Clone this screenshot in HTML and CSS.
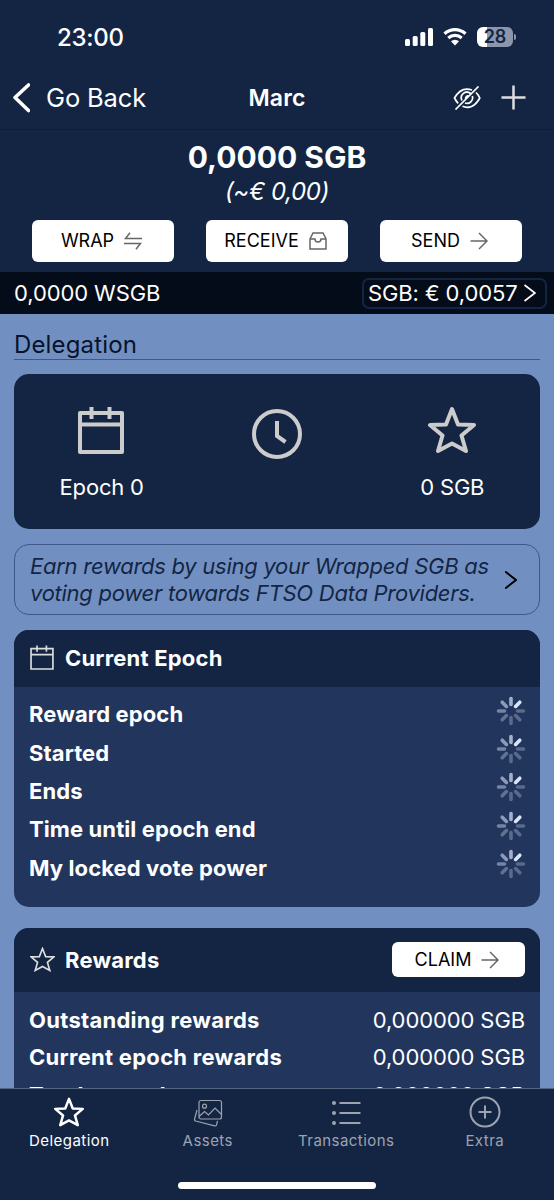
FILE: index.html
```
<!DOCTYPE html>
<html lang="en">
<head>
<meta charset="utf-8">
<title>Wallet</title>
<link rel="stylesheet" href="styles.css">
</head>
<body>
<svg class="defs" aria-hidden="true">
  <symbol id="calendar" viewBox="0 0 48 48"><path d="M2 7h42v39H2zM2 18.500h42M13.500 1v12M31.500 1v12"/></symbol>
  <symbol id="star" viewBox="0 0 48 48"><path d="M24 3l6 15.500 16 .5-12.500 10.500L38 45 24 37.500 10 45l4.500-15.500L2 19l16-.5z"/></symbol>
  <symbol id="arrow" viewBox="0 0 18 18"><path d="M.5 9h16M9 1l8 8-8 8"/></symbol>
  <symbol id="spinner" viewBox="0 0 30 30">
    <path d="M15 2.500v6" opacity=".7"/><path d="M23.800 6.200l-4.200 4.200"/>
    <path d="M27.500 15h-6" opacity=".3"/><path d="M23.800 23.800l-4.200-4.200" opacity=".3"/>
    <path d="M15 27.500v-6" opacity=".3"/><path d="M6.200 23.800l4.200-4.200" opacity=".35"/>
    <path d="M2.500 15h6" opacity=".45"/><path d="M6.200 6.200l4.200 4.200" opacity=".58"/>
  </symbol>
</svg>
<div class="screen">
  <header class="status">
    <span class="time">23:00</span>
    <div class="status-icons">
      <svg class="signal" viewBox="0 0 28 18"><rect x="0" y="11" width="5" height="7" rx="1.500"/><rect x="7.700" y="8" width="5" height="10" rx="1.500"/><rect x="15.300" y="4" width="5" height="14" rx="1.500"/><rect x="23" y="0" width="5" height="18" rx="1.500"/></svg>
      <svg class="wifi" viewBox="0 0 24 18"><path d="M1.500 5.700a15.500 15.500 0 0 1 21 0M5.300 10a9.900 9.900 0 0 1 13.400 0"/><path class="dot" d="M8 13.300a6 6 0 0 1 8 0L12 17.500z"/></svg>
      <div class="battery"><span class="level">28</span><i class="tip"></i></div>
    </div>
  </header>
  <nav class="topbar">
    <div class="back"><svg class="back-icon" viewBox="0 0 20 32"><path d="M18.500 3L5 15.500l13.500 13"/></svg><span>Go Back</span></div>
    <h1 class="title">Marc</h1>
    <div class="actions">
      <svg class="eye" viewBox="0 0 28 24"><path d="M19 4C12 1.500 6 4 1.500 12c1 2 2.200 3.900 3.700 5.300M23 6.500c1.500 1.400 2.800 3.300 3.800 5.500C22.500 20 16 23 9.500 20.300M17.500 7.500A5.600 5.600 0 0 0 9 14.500M19.300 10a5.600 5.600 0 0 1-7.300 7M15.500 10a2.500 2.500 0 0 0-3 2.500M2.500 23.500L25.500.5"/></svg>
      <svg class="plus" viewBox="0 0 26 26"><path d="M13 .5v25M.5 13h25"/></svg>
    </div>
  </nav>
  <section class="balance">
    <div class="amount">0,0000 SGB</div>
    <div class="fiat">(~€ 0,00)</div>
    <div class="buttons">
      <button class="button">WRAP <svg class="button-icon" viewBox="0 0 18 18"><path d="M18 6.500H1.500L6 .8M0 11.500h16.500L12 17.200"/></svg></button>
      <button class="button">RECEIVE <svg class="button-icon" viewBox="0 0 18 18"><path d="M1 7l3-6h10l3 6v10H1zM1 7h5c0 2 1.200 3 3 3s3-1 3-3h5"/></svg></button>
      <button class="button">SEND <svg class="button-icon"><use href="#arrow"/></svg></button>
    </div>
  </section>
  <section class="ticker">
    <span class="wrapped">0,0000 WSGB</span>
    <div class="price"><span>SGB: € 0,0057</span><svg class="price-icon" viewBox="0 0 12 18"><path d="M.5 1l10.500 8L.5 17"/></svg></div>
  </section>
  <main class="content">
    <h2 class="heading">Delegation</h2>
    <section class="summary">
      <div class="stat"><svg class="stat-icon"><use href="#calendar"/></svg><span>Epoch 0</span></div>
      <div class="stat"><svg class="clock" viewBox="0 0 50 50"><circle cx="25" cy="25" r="23"/><path d="M25 12v15l8.500 6"/></svg></div>
      <div class="stat"><svg class="stat-icon"><use href="#star"/></svg><span>0 SGB</span></div>
    </section>
    <section class="hint">
      <p class="hint-text">Earn rewards by using your Wrapped SGB as<br>voting power towards FTSO Data Providers.</p>
      <svg class="hint-icon" viewBox="0 0 12 18"><path d="M.8 1L11 9 .8 17"/></svg>
    </section>
    <section class="card">
      <div class="card-head"><svg class="head-icon"><use href="#calendar"/></svg><h3 class="card-title">Current Epoch</h3></div>
      <div class="rows">
        <div class="row"><span>Reward epoch</span><svg class="spinner"><use href="#spinner"/></svg></div>
        <div class="row"><span>Started</span><svg class="spinner"><use href="#spinner"/></svg></div>
        <div class="row"><span>Ends</span><svg class="spinner"><use href="#spinner"/></svg></div>
        <div class="row"><span>Time until epoch end</span><svg class="spinner"><use href="#spinner"/></svg></div>
        <div class="row"><span>My locked vote power</span><svg class="spinner"><use href="#spinner"/></svg></div>
      </div>
    </section>
    <section class="card">
      <div class="card-head tall"><svg class="head-icon"><use href="#star"/></svg><h3 class="card-title">Rewards</h3><button class="button claim">CLAIM <svg class="button-icon"><use href="#arrow"/></svg></button></div>
      <div class="rows compact">
        <div class="row"><span>Outstanding rewards</span><span class="value">0,000000 SGB</span></div>
        <div class="row"><span>Current epoch rewards</span><span class="value">0,000000 SGB</span></div>
        <div class="row"><span>Total rewards</span><span class="value">0,000000 SGB</span></div>
      </div>
    </section>
  </main>
  <footer class="tabbar">
    <div class="tabs">
      <div class="tab active"><svg class="tab-icon tab-star"><use href="#star"/></svg><span>Delegation</span></div>
      <div class="tab"><svg class="tab-icon thin" viewBox="0 0 30 30"><rect x="6" y="3.500" width="22.500" height="18.500" rx="2"/><circle cx="11.500" cy="9.200" r="2"/><path d="M6 19.500l5.500-5 4 3.500 6.500-7 6.500 6.500M4 13L1.600 22q-.4 1.500 1 2l19 4.900q1.500.4 1.900-1l1-4"/></svg><span>Assets</span></div>
      <div class="tab"><svg class="tab-icon" viewBox="0 0 30 30"><path d="M8.500 6H29.500M8.500 16H29.500M8.500 26H29.500"/><g class="bullets"><circle cx="3" cy="6" r="2"/><circle cx="3" cy="16" r="2"/><circle cx="3" cy="26" r="2"/></g></svg><span>Transactions</span></div>
      <div class="tab"><svg class="tab-icon plus-circle" viewBox="0 0 32 32"><circle cx="16" cy="16" r="14.500"/><path d="M16 9.500v13M9.500 16h13"/></svg><span>Extra</span></div>
    </div>
    <div class="home-indicator"></div>
  </footer>
</div>
</body>
</html>
```
FILE: styles.css
```
* { box-sizing: border-box; }
body { margin: 0; font-family: Inter, "Liberation Sans", sans-serif; font-size: 22px; color: #fff; background: #142544; }
h1, h2, h3, p { margin: 0; }
svg { display: block; flex: none; fill: none; stroke: currentColor; }
.defs { position: absolute; width: 0; height: 0; }
.screen { height: 1200px; display: flex; flex-direction: column; overflow: hidden; background: #142544; }

.status { height: 68px; padding: 6px 38px 0 57px; display: flex; align-items: center; justify-content: space-between; flex: none; }
.time { font-size: 24px; font-weight: 500; letter-spacing: -.3px; }
.status-icons { display: flex; align-items: center; gap: 10px; }
.signal { width: 28px; height: 18px; fill: #fff; stroke: none; }
.wifi { width: 24px; height: 18px; stroke-width: 3.200; }
.dot { fill: #fff; stroke: none; }
.battery { display: flex; align-items: center; gap: 1px; }
.level { width: 36px; height: 20px; border-radius: 6px; background: linear-gradient(90deg, #fff 10px, #8c96aa 10px); color: #142544; font-size: 18px; font-weight: 600; line-height: 20px; text-align: center; }
.tip { width: 2px; height: 6px; border-radius: 0 2px 2px 0; background: #8c96aa; }

.topbar { height: 62px; display: grid; grid-template-columns: 1fr auto 1fr; align-items: center; padding: 0 28px 2px 10px; border-bottom: 1px solid #101d36; flex: none; }
.back { display: flex; align-items: center; gap: 16px; font-size: 25.500px; letter-spacing: -.150px; }
.back-icon { width: 20px; height: 32px; stroke-width: 3.600; stroke-linecap: round; stroke-linejoin: round; }
.title { font-size: 23px; font-weight: 600; letter-spacing: .2px; margin-left: 18px; }
.actions { display: flex; justify-content: flex-end; align-items: center; gap: 20px; }
.eye { width: 28px; height: 24px; stroke-width: 1.700; }
.plus { width: 25px; height: 25px; stroke-width: 2.600; color: #ddd; }

.balance { height: 142px; flex: none; text-align: center; padding: 9px 32px 0; }
.amount { font-size: 30px; line-height: 36px; font-weight: 700; }
.fiat { font-size: 24px; line-height: 30px; padding-top: 2px; font-style: italic; letter-spacing: -.350px; }
.buttons { display: flex; justify-content: space-between; margin-top: 13px; }
.button { width: 142px; height: 42px; padding: 0 3px 0 0; border: 0; border-radius: 6px; background: #fff; color: #000; font: 400 18px/1 Inter, "Liberation Sans", sans-serif; display: flex; align-items: center; justify-content: center; gap: 10px; }
.button-icon { width: 18px; height: 18px; color: #666; stroke-width: 1.500; }

.ticker { height: 42px; flex: none; background: #050c19; display: flex; align-items: center; justify-content: space-between; padding: 0 7px 0 14px; letter-spacing: -.1px; }
.price { height: 31px; width: 185px; border: 2px solid #142544; border-radius: 7px; display: flex; align-items: center; justify-content: space-between; padding: 0 9px 0 4px; }
.price-icon { width: 12px; height: 18px; stroke-width: 1.800; }

.content { flex: 1; min-height: 0; overflow: hidden; background: #7190c1; padding: 0 14px; }
.heading { height: 46px; padding-top: 16px; font-size: 24px; line-height: 29px; font-weight: 400; letter-spacing: .150px; color: #07132c; border-bottom: 1px solid #3d5889; }
.summary { height: 155px; margin-top: 14px; border-radius: 15px; background: #142544; display: grid; grid-template-columns: repeat(3, 1fr); }
.stat { display: flex; flex-direction: column; align-items: center; padding-top: 32px; line-height: 28px; letter-spacing: -.2px; }
.stat-icon { width: 48px; height: 48px; color: #ccc; stroke-width: 4; stroke-linejoin: round; margin-bottom: 19px; }
.clock { width: 50px; height: 50px; color: #ccc; stroke-width: 4; margin-top: 3px; }
.hint { height: 71px; margin-top: 15px; border: 1px solid #3d5889; border-radius: 15px; padding: 0 22px 0 15px; display: flex; align-items: center; justify-content: space-between; color: #142544; }
.hint-text { font-style: italic; line-height: 27px; letter-spacing: -.270px; white-space: nowrap; }
.hint-icon { width: 12px; height: 18px; color: #000; stroke-width: 2; stroke-linecap: round; }
.card { border-radius: 15px; overflow: hidden; background: #22355d; margin-top: 15px; }
.card + .card { margin-top: 21px; }
.card-head { height: 57px; padding: 0 15px 2px 16px; background: #142544; display: flex; align-items: center; gap: 10px; }
.tall { height: 64px; padding-bottom: 0; }
.head-icon { width: 25px; height: 25px; stroke-width: 3.200; color: #ddd; }
.card-title { font-size: 22px; font-weight: 700; flex: 1; letter-spacing: .2px; }
.claim { width: 133px; height: 35px; }
.rows { padding: 8px 15px 20px; font-weight: 700; letter-spacing: .1px; }
.row { height: 38.400px; display: flex; align-items: center; justify-content: space-between; }
.spinner { width: 30px; height: 30px; color: #dbe5fa; stroke-width: 3.600; stroke-linecap: round; margin: -7px -1px 0 0; }
.compact { padding-top: 9px; letter-spacing: .280px; }
.compact .row { height: 37.500px; }
.value { font-weight: 400; letter-spacing: -.1px; }

.tabbar { height: 112px; flex: none; background: #142544; border-top: 1px solid #53647f; display: flex; flex-direction: column; align-items: center; }
.tabs { align-self: stretch; height: 93px; display: grid; grid-template-columns: repeat(4, 1fr); font-size: 15px; letter-spacing: .450px; color: #9da3ae; }
.tab { display: flex; flex-direction: column; align-items: center; padding-top: 8px; gap: 4px; line-height: 20px; }
.tab-icon { width: 30px; height: 30px; stroke-width: 2; }
.tab-star { stroke-width: 4; stroke-linejoin: round; }
.thin { stroke-width: 1.200; }
.plus-circle { width: 32px; height: 32px; margin: -1px 0; }
.bullets { fill: currentColor; stroke: none; }
.active { color: #fff; }
.home-indicator { width: 198px; height: 7px; border-radius: 4px; background: #fff; }
```
